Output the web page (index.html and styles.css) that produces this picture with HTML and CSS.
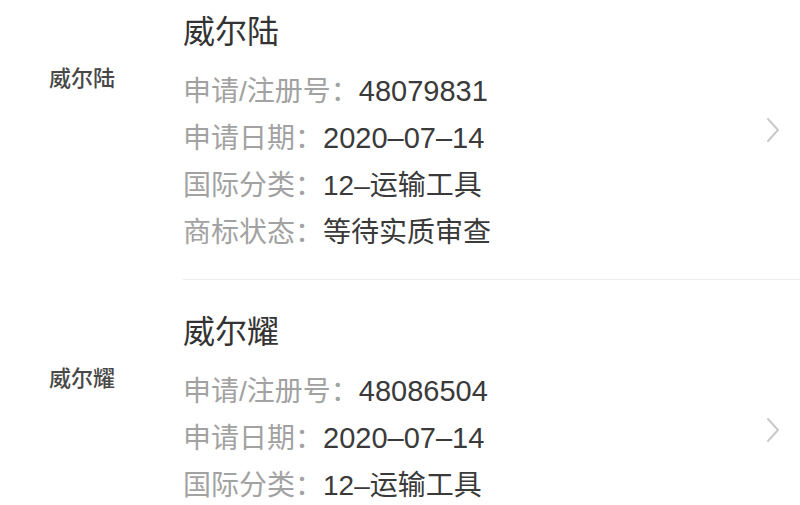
FILE: index.html
```html
<!DOCTYPE html>
<html lang="zh-CN">
<head>
    <meta charset="UTF-8">
    <meta name="viewport" content="width=device-width, initial-scale=1.0">
    <title>商标查询结果</title>
    <link rel="stylesheet" href="styles.css">
</head>
<body>
    <div class="result-list">

        <div class="result-item">
            <div class="thumb">威尔陆</div>
            <div class="item-body">
                <div class="item-info">
                    <h2 class="item-name">威尔陆</h2>
                    <p><span class="label">申请/注册号：</span><span class="value num">48079831</span></p>
                    <p><span class="label">申请日期：</span><span class="value num">2020–07–14</span></p>
                    <p><span class="label">国际分类：</span><span class="value">12–运输工具</span></p>
                    <p><span class="label">商标状态：</span><span class="value">等待实质审查</span></p>
                </div>
                <svg class="arrow" width="14" height="26" viewBox="0 0 14 26">
                    <polyline points="2,2 12,13 2,24" fill="none" stroke="#c9c9c9" stroke-width="2" stroke-linecap="round" stroke-linejoin="round"/>
                </svg>
            </div>
        </div>

        <div class="result-item">
            <div class="thumb">威尔耀</div>
            <div class="item-body">
                <div class="item-info">
                    <h2 class="item-name">威尔耀</h2>
                    <p><span class="label">申请/注册号：</span><span class="value num">48086504</span></p>
                    <p><span class="label">申请日期：</span><span class="value num">2020–07–14</span></p>
                    <p><span class="label">国际分类：</span><span class="value">12–运输工具</span></p>
                </div>
                <svg class="arrow" width="14" height="26" viewBox="0 0 14 26">
                    <polyline points="2,2 12,13 2,24" fill="none" stroke="#c9c9c9" stroke-width="2" stroke-linecap="round" stroke-linejoin="round"/>
                </svg>
            </div>
        </div>

    </div>
</body>
</html>
```

FILE: styles.css
```css
body {
    margin: 0;
    padding: 0;
    background-color: #ffffff;
    color: #333;
    font-family: "Liberation Sans", "Noto Sans CJK SC", sans-serif;
    overflow: hidden;
}

/* list is scrolled a little, first item starts above the top edge */
.result-list {
    margin-top: -20px;
}

.result-item {
    display: flex;
    height: 300px;
}

.thumb {
    width: 164px;
    flex-shrink: 0;
    margin-right: 19px;
    padding-top: 81px;
    text-align: center;
    font-family: "Noto Sans CJK SC", serif;
    font-size: 22px;
    font-weight: 500;
    line-height: 30px;
    color: #484848;
}

.item-body {
    flex: 1;
    display: flex;
    align-items: flex-start;
    padding: 30px 20px 0 0;
    border-bottom: 1px solid #ededed;
}

.item-info {
    flex: 1;
}

.item-name {
    margin: 0 0 14px;
    font-size: 32px;
    line-height: 44px;
    font-weight: normal;
    color: #333;
}

.item-info p {
    margin: 0;
    font-size: 28px;
    line-height: 47px;
    white-space: nowrap;
}

.label {
    color: #a2a2a2;
}

.value {
    color: #3a3a3a;
}

.num {
    font-size: 29px;
}

.arrow {
    display: block;
    flex-shrink: 0;
    align-self: center;
    margin-top: -30px;
}
```
